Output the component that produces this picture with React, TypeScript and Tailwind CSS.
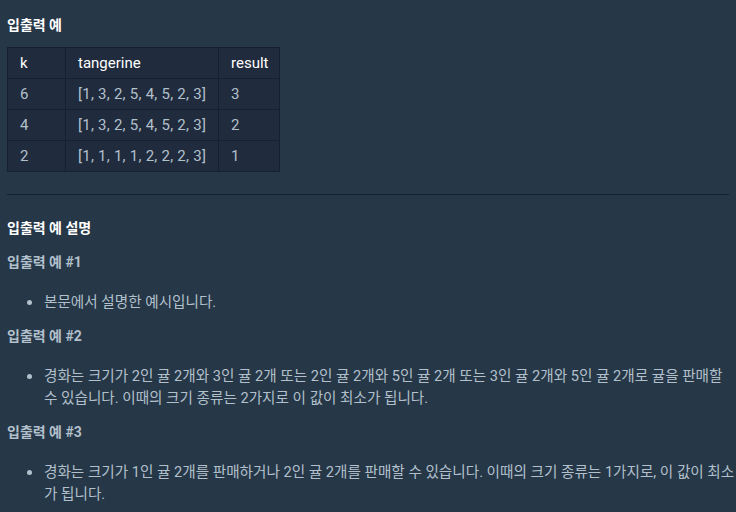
const rows = [
  { k: "6", tangerine: "[1, 3, 2, 5, 4, 5, 2, 3]", result: "3" },
  { k: "4", tangerine: "[1, 3, 2, 5, 4, 5, 2, 3]", result: "2" },
  { k: "2", tangerine: "[1, 1, 1, 1, 2, 2, 2, 3]", result: "1" },
];

const font = "font-['Roboto','Noto_Sans_CJK_KR',sans-serif]";

const SubTitle = ({ children }: { children: React.ReactNode }) => (
  <h6 className="mt-[12px] text-[14px] font-bold leading-[22px] text-[#b2c0cc]">{children}</h6>
);

const Item = ({ children }: { children: React.ReactNode }) => (
  <div className="-mr-[8px] mt-[18px] flex pl-[20px]">
    <span className="mt-[9px] h-[5px] w-[5px] shrink-0 rounded-full bg-[#b2c0cc]" />
    <p className="ml-[12px] text-[14.6px] leading-[22px] text-[#b2c0cc]">{children}</p>
  </div>
);

const App = () => {
  return (
    <div className={`min-h-[512px] w-full bg-[#263747] px-[7px] pt-[14px] ${font}`}>
      <h5 className="text-[14px] font-bold leading-[22px] text-white">입출력 예</h5>
      <table className="mt-[11px] w-[272px] table-fixed border-collapse whitespace-nowrap text-[15px]">
        <colgroup>
          <col className="w-[58px]" />
          <col className="w-[153px]" />
          <col className="w-[61px]" />
        </colgroup>
        <thead>
          <tr>
            <th className="h-[31px] border border-[#172030] bg-[#202b3d] px-3 text-left font-normal text-white">k</th>
            <th className="h-[31px] border border-[#172030] bg-[#202b3d] px-3 text-left font-normal text-white">tangerine</th>
            <th className="h-[31px] border border-[#172030] bg-[#202b3d] px-3 text-left font-normal text-white">result</th>
          </tr>
        </thead>
        <tbody>
          {rows.map((r) => (
            <tr key={r.tangerine + r.k}>
              <td className="h-[31px] border border-[#172030] bg-[#202b3d] px-3 text-[#b2c0cc]">{r.k}</td>
              <td className="h-[31px] border border-[#172030] bg-[#202b3d] px-3 tracking-[0.25px] text-[#b2c0cc]">{r.tangerine}</td>
              <td className="h-[31px] border border-[#172030] bg-[#202b3d] px-3 text-[#b2c0cc]">{r.result}</td>
            </tr>
          ))}
        </tbody>
      </table>
      <hr className="mt-[22px] border-t border-[#172030]" />
      <h5 className="mt-[22px] text-[14px] font-bold leading-[22px] text-white">입출력 예 설명</h5>
      <SubTitle>입출력 예 #1</SubTitle>
      <Item>본문에서 설명한 예시입니다.</Item>
      <SubTitle>입출력 예 #2</SubTitle>
      <Item>
        경화는 크기가 2인 귤 2개와 3인 귤 2개 또는 2인 귤 2개와 5인 귤 2개 또는 3인 귤 2개와 5인 귤 2개로 귤을 판매할 수 있습니다. 이때의 크기 종류는 2가지로 이 값이 최소가 됩니다.
      </Item>
      <SubTitle>입출력 예 #3</SubTitle>
      <Item>
        경화는 크기가 1인 귤 2개를 판매하거나 2인 귤 2개를 판매할 수 있습니다. 이때의 크기 종류는 1가지로, 이 값이 최소가 됩니다.
      </Item>
    </div>
  );
};

export default App;
